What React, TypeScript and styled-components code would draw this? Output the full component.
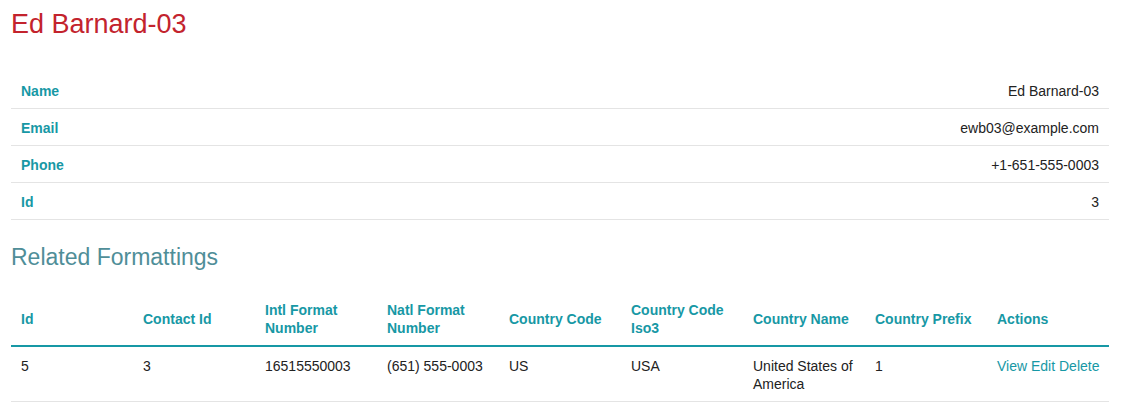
import React from "react";
import styled, { createGlobalStyle } from "styled-components";

const GlobalStyle = createGlobalStyle`
  html, body {
    margin: 0;
    padding: 0;
    background: #ffffff;
  }
  body {
    font-family: "Liberation Sans", Arial, Helvetica, sans-serif;
    font-size: 14px;
    color: #222222;
  }
`;

const Page = styled.main`
  width: 1098px;
  padding: 8px 0 0 11px;
`;

const Title = styled.h3`
  margin: 0 0 32px;
  font-size: 27px;
  line-height: 32px;
  font-weight: normal;
  color: #c3232d;
`;

const Table = styled.table<{ $fixed?: boolean }>`
  width: 100%;
  border-collapse: separate;
  border-spacing: 0;
  table-layout: ${(p) => (p.$fixed ? "fixed" : "auto")};
  font-size: 14px;
  line-height: 18px;
`;

const LabelCell = styled.th`
  text-align: left;
  font-weight: bold;
  color: #1798a5;
  padding: 10px 10px 8px;
  border-bottom: 1px solid #e4e4e4;
`;

const ValueCell = styled.td`
  text-align: right;
  color: #222222;
  padding: 10px 10px 8px;
  border-bottom: 1px solid #e4e4e4;
`;

const SubTitle = styled.h4`
  margin: 23px 0 20px;
  font-size: 23px;
  line-height: 28px;
  font-weight: normal;
  color: #4f8e98;
`;

const HeadCell = styled.th`
  text-align: left;
  vertical-align: middle;
  font-weight: bold;
  color: #1798a5;
  padding: 10px 10px 8px;
  border-bottom: 2px solid #1798a5;
`;

const BodyCell = styled.td<{ $nowrap?: boolean }>`
  text-align: left;
  vertical-align: top;
  color: #222222;
  padding: 10px 10px 8px;
  border-bottom: 1px solid #e4e4e4;
  white-space: ${(p) => (p.$nowrap ? "nowrap" : "normal")};
`;

const ActionLink = styled.a`
  color: #1798a5;
  text-decoration: none;
  cursor: pointer;
`;

const details: [string, string][] = [
  ["Name", "Ed Barnard-03"],
  ["Email", "ewb03@example.com"],
  ["Phone", "+1-651-555-0003"],
  ["Id", "3"],
];

const headers = [
  "Id",
  "Contact Id",
  "Intl Format Number",
  "Natl Format Number",
  "Country Code",
  "Country Code Iso3",
  "Country Name",
  "Country Prefix",
  "Actions",
];

const row = [
  "5",
  "3",
  "16515550003",
  "(651) 555-0003",
  "US",
  "USA",
  "United States of America",
  "1",
];

export default function App() {
  return (
    <>
      <GlobalStyle />
      <Page>
        <Title>Ed Barnard-03</Title>
        <Table>
          <tbody>
            {details.map(([label, value]) => (
              <tr key={label}>
                <LabelCell scope="row">{label}</LabelCell>
                <ValueCell>{value}</ValueCell>
              </tr>
            ))}
          </tbody>
        </Table>
        <SubTitle>Related Formattings</SubTitle>
        <Table $fixed>
          <thead>
            <tr>
              {headers.map((h) => (
                <HeadCell key={h} scope="col">
                  {h}
                </HeadCell>
              ))}
            </tr>
          </thead>
          <tbody>
            <tr>
              {row.map((c, i) => (
                <BodyCell key={i}>{c}</BodyCell>
              ))}
              <BodyCell $nowrap>
                <ActionLink>View</ActionLink> <ActionLink>Edit</ActionLink>{" "}
                <ActionLink>Delete</ActionLink>
              </BodyCell>
            </tr>
          </tbody>
        </Table>
      </Page>
    </>
  );
}
